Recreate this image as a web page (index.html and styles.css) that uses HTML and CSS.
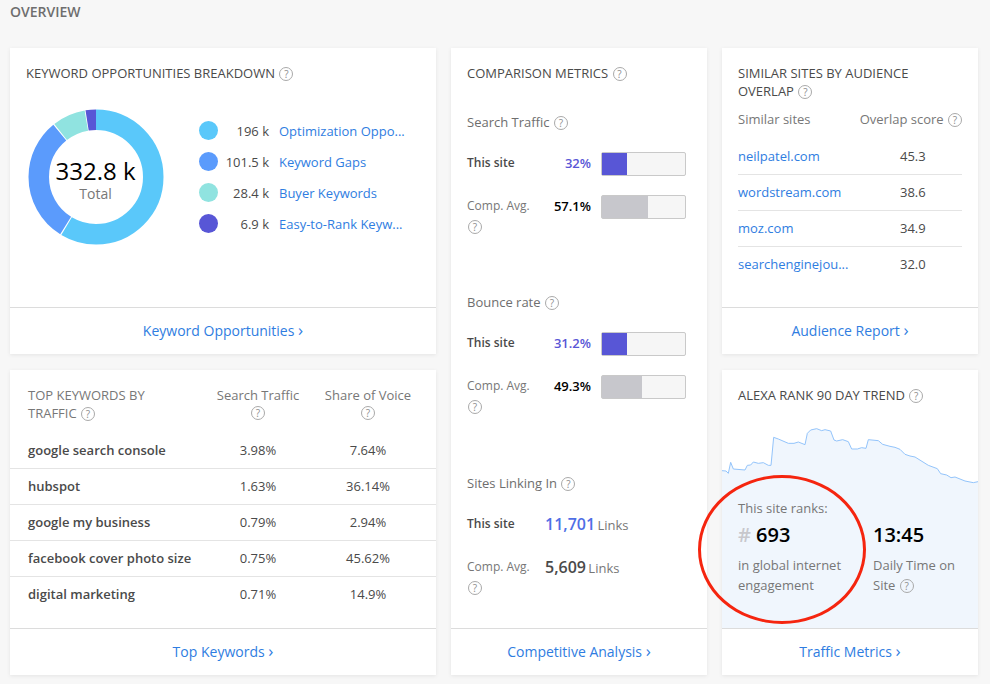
FILE: index.html
```html
<!DOCTYPE html>
<html lang="en">

<head>
    <meta charset="UTF-8">
    <meta name="viewport" content="width=device-width, initial-scale=1.0">
    <title>Overview</title>
    <link rel="stylesheet" href="styles.css">
</head>

<body>
    <h1 class="page-title">OVERVIEW</h1>
    <div class="overview-grid">

        <section class="card">
            <h2 class="card-title">KEYWORD OPPORTUNITIES BREAKDOWN <span class="help">?</span></h2>
            <div class="breakdown">
                <div class="donut">
                    <svg width="136" height="136" viewBox="0 0 136 136">
                        <g fill="none" stroke-width="20.5" transform="rotate(-90 68 68)">
                            <circle cx="68" cy="68" r="57.25" pathLength="100" stroke="#5ac8fa" stroke-dasharray="58.6 41.4" stroke-dashoffset="0"></circle>
                            <circle cx="68" cy="68" r="57.25" pathLength="100" stroke="#5b9bfc" stroke-dasharray="30.2 69.8" stroke-dashoffset="-58.9"></circle>
                            <circle cx="68" cy="68" r="57.25" pathLength="100" stroke="#90e3e0" stroke-dasharray="7.9 92.1" stroke-dashoffset="-89.4"></circle>
                            <circle cx="68" cy="68" r="57.25" pathLength="100" stroke="#5856d6" stroke-dasharray="2.5 97.5" stroke-dashoffset="-97.5"></circle>
                        </g>
                    </svg>
                    <div class="donut-label">
                        <div class="donut-value">332.8 k</div>
                        <div class="donut-caption">Total</div>
                    </div>
                </div>
                <ul class="legend">
                    <li><span class="dot dot-sky"></span><span class="legend-num">196 k</span><a href="#">Optimization Oppo...</a></li>
                    <li><span class="dot dot-blue"></span><span class="legend-num">101.5 k</span><a href="#">Keyword Gaps</a></li>
                    <li><span class="dot dot-teal"></span><span class="legend-num">28.4 k</span><a href="#">Buyer Keywords</a></li>
                    <li><span class="dot dot-indigo"></span><span class="legend-num">6.9 k</span><a href="#">Easy-to-Rank Keyw...</a></li>
                </ul>
            </div>
            <a class="card-footer" href="#">Keyword Opportunities <span class="chev">›</span></a>
        </section>

        <section class="card card-tall">
            <h2 class="card-title">COMPARISON METRICS <span class="help">?</span></h2>

            <div class="metric">
                <h3 class="metric-title">Search Traffic <span class="help">?</span></h3>
                <div class="metric-row">
                    <div class="metric-name strong">This site</div>
                    <div class="metric-pct site">32%</div>
                    <div class="bar"><div class="bar-fill site-fill" style="width: 30%"></div></div>
                </div>
                <div class="metric-row">
                    <div class="metric-name">Comp. Avg. <span class="help">?</span></div>
                    <div class="metric-pct">57.1%</div>
                    <div class="bar"><div class="bar-fill" style="width: 55%"></div></div>
                </div>
            </div>

            <div class="metric">
                <h3 class="metric-title">Bounce rate <span class="help">?</span></h3>
                <div class="metric-row">
                    <div class="metric-name strong">This site</div>
                    <div class="metric-pct site">31.2%</div>
                    <div class="bar"><div class="bar-fill site-fill" style="width: 30%"></div></div>
                </div>
                <div class="metric-row">
                    <div class="metric-name">Comp. Avg. <span class="help">?</span></div>
                    <div class="metric-pct">49.3%</div>
                    <div class="bar"><div class="bar-fill" style="width: 48%"></div></div>
                </div>
            </div>

            <div class="metric metric-links">
                <h3 class="metric-title">Sites Linking In <span class="help">?</span></h3>
                <div class="links-row">
                    <div class="metric-name strong">This site</div>
                    <div><span class="links-num site">11,701</span> <span class="links-unit">Links</span></div>
                </div>
                <div class="links-row">
                    <div class="metric-name">Comp. Avg. <span class="help">?</span></div>
                    <div><span class="links-num">5,609</span> <span class="links-unit">Links</span></div>
                </div>
            </div>

            <a class="card-footer" href="#">Competitive Analysis <span class="chev">›</span></a>
        </section>

        <section class="card">
            <h2 class="card-title">SIMILAR SITES BY AUDIENCE OVERLAP <span class="help">?</span></h2>
            <div class="sites-head">
                <span>Similar sites</span>
                <span>Overlap score <span class="help">?</span></span>
            </div>
            <div class="site-row"><a href="#">neilpatel.com</a><span>45.3</span></div>
            <div class="site-row"><a href="#">wordstream.com</a><span>38.6</span></div>
            <div class="site-row"><a href="#">moz.com</a><span>34.9</span></div>
            <div class="site-row"><a href="#">searchenginejou...</a><span>32.0</span></div>
            <a class="card-footer" href="#">Audience Report <span class="chev">›</span></a>
        </section>

        <section class="card">
            <div class="kw-row kw-head">
                <div class="kw-title">TOP KEYWORDS BY TRAFFIC <span class="help">?</span></div>
                <div>Search Traffic <span class="help help-below">?</span></div>
                <div>Share of Voice <span class="help help-below">?</span></div>
            </div>
            <div class="kw-row"><div class="kw-name">google search console</div><div>3.98%</div><div>7.64%</div></div>
            <div class="kw-row"><div class="kw-name">hubspot</div><div>1.63%</div><div>36.14%</div></div>
            <div class="kw-row"><div class="kw-name">google my business</div><div>0.79%</div><div>2.94%</div></div>
            <div class="kw-row"><div class="kw-name">facebook cover photo size</div><div>0.75%</div><div>45.62%</div></div>
            <div class="kw-row"><div class="kw-name">digital marketing</div><div>0.71%</div><div>14.9%</div></div>
            <a class="card-footer" href="#">Top Keywords <span class="chev">›</span></a>
        </section>

        <section class="card">
            <h2 class="card-title">ALEXA RANK 90 DAY TREND <span class="help">?</span></h2>
            <div class="trend">
                <svg class="trend-chart" viewBox="6 0 768 639" preserveAspectRatio="none">
                    <path fill="#f0f6fd" d="M6 167L18 168L25 175L32 142L40 162L75 165L82 151L92 150L100 141L115 145L130 143L145 151L153 151L161 67L175 72L205 85L222 85L235 81L255 89L262 55L272 45L290 41L305 47L315 44L332 48L342 75L350 78L368 74L385 80L395 102L412 102L425 98L438 100L445 74L475 77L488 88L510 94L525 97L540 103L555 118L570 123L585 126L625 151L652 161L662 176L680 180L693 188L705 186L735 198L760 203L774 200V639H6Z"></path>
                    <path fill="none" stroke="#93c4fb" stroke-width="3" d="M6 167L18 168L25 175L32 142L40 162L75 165L82 151L92 150L100 141L115 145L130 143L145 151L153 151L161 67L175 72L205 85L222 85L235 81L255 89L262 55L272 45L290 41L305 47L315 44L332 48L342 75L350 78L368 74L385 80L395 102L412 102L425 98L438 100L445 74L475 77L488 88L510 94L525 97L540 103L555 118L570 123L585 126L625 151L652 161L662 176L680 180L693 188L705 186L735 198L760 203L774 200"></path>
                </svg>
                <div class="trend-stats">
                    <div class="rank">
                        <div class="trend-text">This site ranks:</div>
                        <div class="trend-num"><span class="hash">#</span> 693</div>
                        <div class="trend-text">in global internet engagement</div>
                    </div>
                    <div class="time">
                        <div class="trend-num">13:45</div>
                        <div class="trend-text">Daily Time on Site <span class="help">?</span></div>
                    </div>
                </div>
                <div class="red-circle"></div>
            </div>
            <a class="card-footer" href="#">Traffic Metrics <span class="chev">›</span></a>
        </section>

    </div>
</body>

</html>
```

FILE: styles.css
```css
body {
    margin: 0;
    height: 684px;
    overflow: hidden;
    background-color: #f7f7f7;
    font-family: "Open Sans", Arial, sans-serif;
    font-size: 13px;
    color: #4a4a4a;
}

a {
    color: #2f7de1;
    text-decoration: none;
}

.page-title {
    margin: 0;
    height: 48px;
    padding: 3px 0 0 10px;
    box-sizing: border-box;
    font-size: 14px;
    line-height: 18px;
    font-weight: 600;
    color: #6e6e6e;
}

.overview-grid {
    display: grid;
    grid-template-columns: 426px 256px 256px;
    grid-template-rows: 306px 305px;
    column-gap: 15px;
    row-gap: 16px;
    margin-left: 10px;
}

.card {
    display: flex;
    flex-direction: column;
    background-color: white;
    box-shadow: 0 1px 4px rgba(0, 0, 0, 0.08);
}

.card-tall {
    grid-column: 2;
    grid-row: 1 / span 2;
}

.card-title {
    margin: 0;
    padding: 16px 16px 0;
    font-size: 13px;
    line-height: 18px;
    font-weight: 400;
    color: #4a4a4a;
}

.help {
    display: inline-block;
    width: 12px;
    height: 12px;
    margin-left: 1px;
    border: 1px solid #a9a9a9;
    border-radius: 50%;
    font-size: 10px;
    line-height: 12px;
    font-weight: 400;
    text-align: center;
    color: #8e8e8e;
}

.help-below {
    display: block;
    margin: 2px auto 0;
}

.card-footer {
    display: block;
    flex: none;
    margin-top: auto;
    height: 46px;
    border-top: 1px solid #dcdcdc;
    font-size: 14px;
    line-height: 46px;
    text-align: center;
}

.chev {
    font-size: 17px;
    line-height: 17px;
}

/* keyword breakdown */
.breakdown {
    display: flex;
    padding: 27px 0 0 17.5px;
}

.donut {
    position: relative;
    width: 136px;
    height: 136px;
}

.donut-label {
    position: absolute;
    top: 47px;
    left: 0;
    width: 136px;
    text-align: center;
}

.donut-value {
    font-size: 24px;
    line-height: 30px;
    color: black;
}

.donut-caption {
    font-size: 14px;
    line-height: 16px;
    color: #777;
}

.legend {
    margin: 0;
    padding: 6px 0 0 35.5px;
    list-style: none;
}

.legend li {
    display: flex;
    align-items: center;
    height: 31px;
}

.legend-num {
    width: 51px;
    margin-right: 10px;
    text-align: right;
}

.dot {
    width: 19px;
    height: 19px;
    border-radius: 50%;
}

.dot-sky { background-color: #5ac8fa; }
.dot-blue { background-color: #5b9bfc; }
.dot-teal { background-color: #90e3e0; }
.dot-indigo { background-color: #5856d6; }

/* comparison metrics */
.metric {
    flex: none;
    height: 180px;
    padding: 0 16px;
    box-sizing: border-box;
}

.card-title + .metric {
    margin-top: 24px;
}

.metric.metric-links {
    height: auto;
    margin-top: 1px;
}

.metric-title {
    margin: 0 0 21px;
    padding-top: 7px;
    font-size: 13px;
    line-height: 18px;
    font-weight: 400;
    color: #6e6e6e;
}

.metric-row {
    display: flex;
    height: 43px;
}

.metric-name {
    width: 70px;
    font-size: 12px;
    line-height: 21px;
    color: #777;
}

.metric-name.strong {
    font-weight: 600;
    color: #4a4a4a;
}

.metric-pct {
    width: 54px;
    margin-right: 10px;
    line-height: 22px;
    text-align: right;
    font-weight: 600;
    color: black;
}

.metric-pct.site {
    color: #5856d6;
}

.bar {
    width: 83px;
    height: 22px;
    border: 1px solid #c9c9c9;
    border-radius: 2px;
    background-color: #f6f6f6;
}

.bar-fill {
    height: 100%;
    background-color: #c7c7cc;
}

.bar-fill.site-fill {
    background-color: #5856d6;
}

.links-row {
    display: flex;
    height: 43px;
}

.links-row .metric-name {
    width: 78px;
}

.links-num {
    font-size: 16px;
    line-height: 22px;
    font-weight: 600;
}

.links-num.site {
    color: #4f6fe6;
}

.links-unit {
    margin-left: -1px;
    color: #777;
}

/* similar sites */
.sites-head {
    display: flex;
    justify-content: space-between;
    margin: 10px 16px 0;
    height: 29px;
    line-height: 18px;
    color: #777;
}

.site-row {
    display: flex;
    height: 35px;
    margin: 0 16px;
    border-bottom: 1px solid #e4e4e4;
    line-height: 35px;
}

.site-row:last-of-type {
    border-bottom: none;
}

.site-row a {
    width: 162px;
}

/* top keywords */
.kw-row {
    display: grid;
    grid-template-columns: 175px 110px 110px;
    height: 35px;
    padding-left: 18px;
    border-bottom: 1px solid #e4e4e4;
    line-height: 35px;
    text-align: center;
}

.kw-row:last-of-type {
    border-bottom: none;
}

.kw-name {
    font-weight: 600;
    text-align: left;
    white-space: nowrap;
}

.kw-row.kw-head {
    height: 63px;
    padding-top: 16px;
    box-sizing: border-box;
    border-bottom: none;
    line-height: 18px;
    color: #777;
}

.kw-title {
    width: 130px;
    text-align: left;
}

/* alexa trend */
.trend {
    position: relative;
    flex: 1;
    margin-top: 11px;
}

.trend-chart {
    position: absolute;
    top: 0;
    left: 0;
    width: 100%;
    height: 100%;
}

.trend-stats {
    position: relative;
    display: flex;
    padding: 83px 0 0 16px;
}

.rank {
    width: 135px;
}

.time {
    width: 90px;
    padding-top: 23px;
}

.trend-text {
    line-height: 20px;
    color: #777;
}

.trend-num {
    margin: 3px 0 6px;
    font-size: 20px;
    line-height: 28px;
    font-weight: 600;
    color: black;
}

.time .trend-num {
    margin-top: 0;
}

.hash {
    color: #c7c7cc;
}

.red-circle {
    position: absolute;
    left: -24px;
    top: 60px;
    width: 162px;
    height: 143px;
    border: 3px solid #f5250f;
    border-radius: 50%;
}
```
